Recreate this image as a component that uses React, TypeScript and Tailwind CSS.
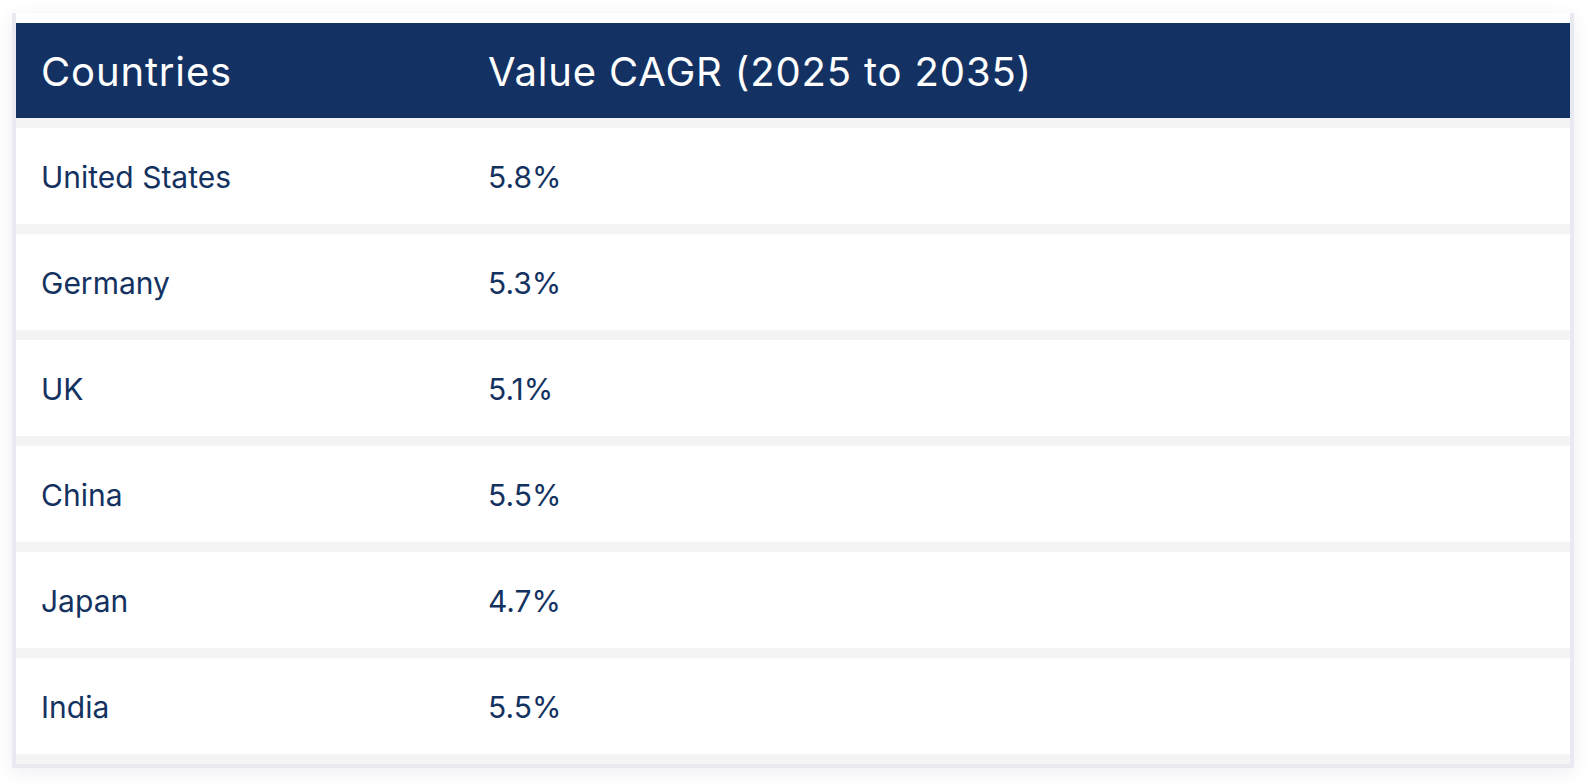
import React from 'react';

const rows = [
  { country: 'United States', cagr: '5.8%' },
  { country: 'Germany', cagr: '5.3%' },
  { country: 'UK', cagr: '5.1%' },
  { country: 'China', cagr: '5.5%' },
  { country: 'Japan', cagr: '4.7%' },
  { country: 'India', cagr: '5.5%' },
];

const App: React.FC = () => {
  return (
    <div className="min-h-screen bg-white pt-[13px] px-[12px] font-['Inter',sans-serif]">
      <div className="w-[1562px] bg-white pt-[10px] border-x-4 border-b-4 border-[#e9eaf1] shadow-[0_4px_18px_rgba(20,30,80,0.07)]">
        {/* Header */}
        <div className="flex items-center h-[105px] pt-[2px] bg-[#133263] border-b-[10px] border-[#f4f4f4] text-white text-[40px] tracking-[0.85px]">
          <div className="w-[447px] pl-[25px]">Countries</div>
          <div className="pl-[25px]">Value CAGR (2025 to 2035)</div>
        </div>

        {/* Rows */}
        {rows.map((r) => (
          <div
            key={r.country}
            className="flex items-center h-[106px] pt-[2px] border-b-[10px] border-[#f4f4f4] text-[30px] text-[#14325f]"
          >
            <div className="w-[447px] pl-[25px]">{r.country}</div>
            <div className="pl-[25px]">{r.cagr}</div>
          </div>
        ))}
      </div>
    </div>
  );
};

export default App;
